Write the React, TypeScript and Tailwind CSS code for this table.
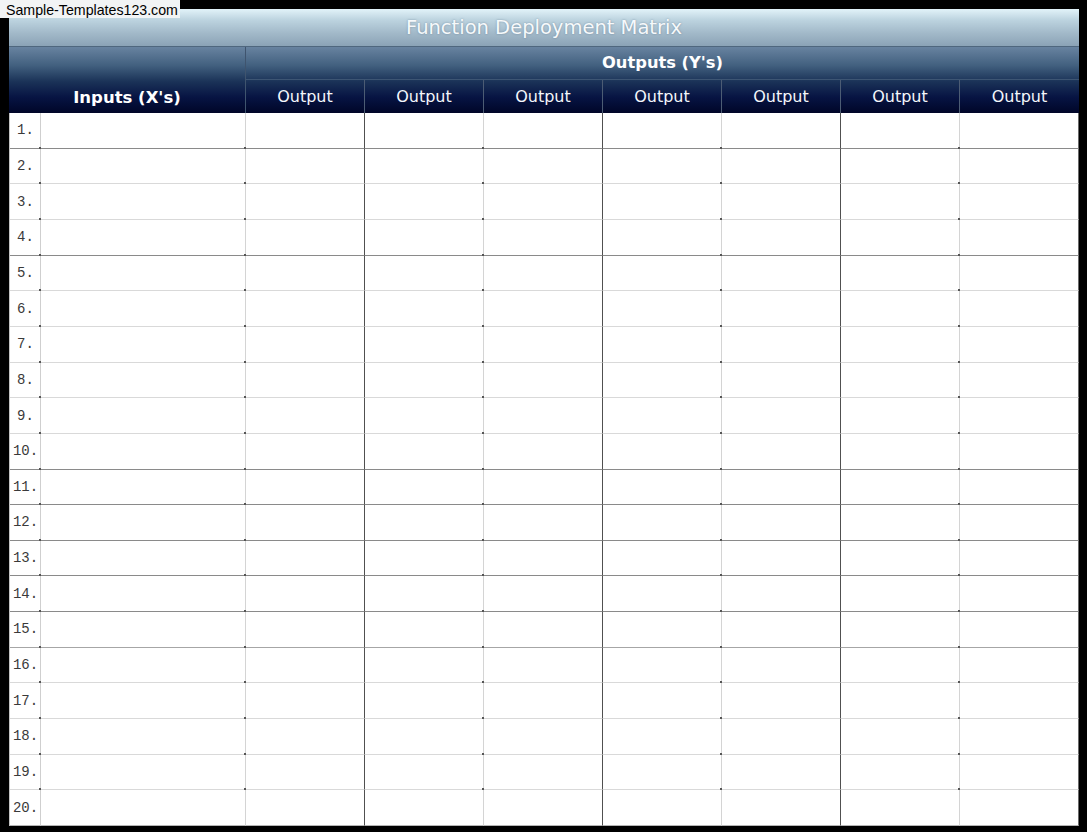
import React from "react";

const rowBottom = (i: number): string => {
  if ([1, 4, 10, 11, 12, 13, 14].includes(i)) return "border-b-[#8a8a8a]";
  if (i === 15) return "border-b-[#a6a6a6]";
  if (i === 20) return "border-b-[#b4b4b4]";
  return "border-b-[#d9d9d9]";
};

const colRight = [
  "border-r-[#cfcfcf]",
  "border-r-[#d4d4d4]",
  "border-r-[#505050]",
  "border-r-[#d4d4d4]",
  "border-r-[#505050]",
  "border-r-[#d4d4d4]",
  "border-r-[#505050]",
  "border-r-[#d4d4d4]",
  "border-r-[#6a6a6a]",
];

const dotCols = new Set([0, 1, 3, 5, 7]);

export default function App() {
  const rows = Array.from({ length: 20 }, (_, i) => i + 1);
  const cols = Array.from({ length: 9 }, (_, i) => i);
  return (
    <div className="relative w-[1087px] h-[832px] bg-black pt-[9px] pl-[9px] overflow-hidden">
      <div className="w-[1070px] flex flex-col font-['DejaVu_Sans',Verdana,sans-serif]">
        {/* Title band */}
        <div className="h-[38px] border-b border-b-[#4f677e] bg-[linear-gradient(to_bottom,#e2f3f9_0%,#bcd3df_30%,#a2b9c9_65%,#8ba3b6_100%)] flex items-center justify-center">
          <span className="text-[19.5px] leading-none text-[#f6f9fb] [text-shadow:0_0_2px_rgba(70,95,120,0.55)]">
            Function Deployment Matrix
          </span>
        </div>
        {/* Dark header */}
        <div className="h-[66px] flex bg-[linear-gradient(to_bottom,#6883a0_0%,#42607f_28%,#1b3358_52%,#071443_76%,#000628_100%)] text-white">
          <div className="w-[237px] border-r border-r-[#3f546e] flex flex-col">
            <div className="h-[33px]" />
            <div className="h-[33px] flex items-center justify-center pt-[4px]">
              <span className="text-[16.5px] font-bold leading-none">Inputs (X's)</span>
            </div>
          </div>
          <div className="w-[833px] flex flex-col">
            <div className="h-[33px] border-b border-b-[#3d5573] flex items-center justify-center">
              <span className="text-[16.3px] font-bold leading-none">Outputs (Y's)</span>
            </div>
            <div className="h-[33px] grid grid-cols-[repeat(7,119px)]">
              {Array.from({ length: 7 }, (_, i) => (
                <div
                  key={i}
                  className={`flex items-center justify-center ${i < 6 ? "border-r border-r-[#4c5c74]" : ""}`}
                >
                  <span className="text-[16px] leading-none text-[#f4f7fb]">Output</span>
                </div>
              ))}
            </div>
          </div>
        </div>
        {/* Body */}
        <div className="h-[713px] bg-white border-l border-l-[#c2c2c2] grid grid-cols-[31px_205px_repeat(7,119px)] grid-rows-[repeat(20,minmax(0,1fr))]">
          {rows.map((r) =>
            cols.map((c) => (
              <div
                key={`${r}-${c}`}
                className={`relative border-b border-r ${rowBottom(r)} ${colRight[c]} ${
                  c === 0 ? "flex items-center justify-center" : ""
                }`}
              >
                {c === 0 && (
                  <span className="font-['Liberation_Mono',monospace] text-[14px] leading-none text-[#3a3a3a] pl-[1px]">
                    {r}.
                  </span>
                )}
                {dotCols.has(c) && r < 20 && (
                  <span className="absolute z-10 right-[-1px] bottom-[-1px] w-[2px] h-[2px] bg-[#555555]" />
                )}
              </div>
            ))
          )}
        </div>
      </div>
      {/* Watermark */}
      <div className="absolute left-0 top-0 h-[18px] pl-[6px] pr-[2px] pt-[2px] bg-[#f2f4f5] font-['Liberation_Sans',Arial,sans-serif] text-[14.2px] leading-[16px] text-black">
        Sample-Templates123.com
      </div>
    </div>
  );
}
